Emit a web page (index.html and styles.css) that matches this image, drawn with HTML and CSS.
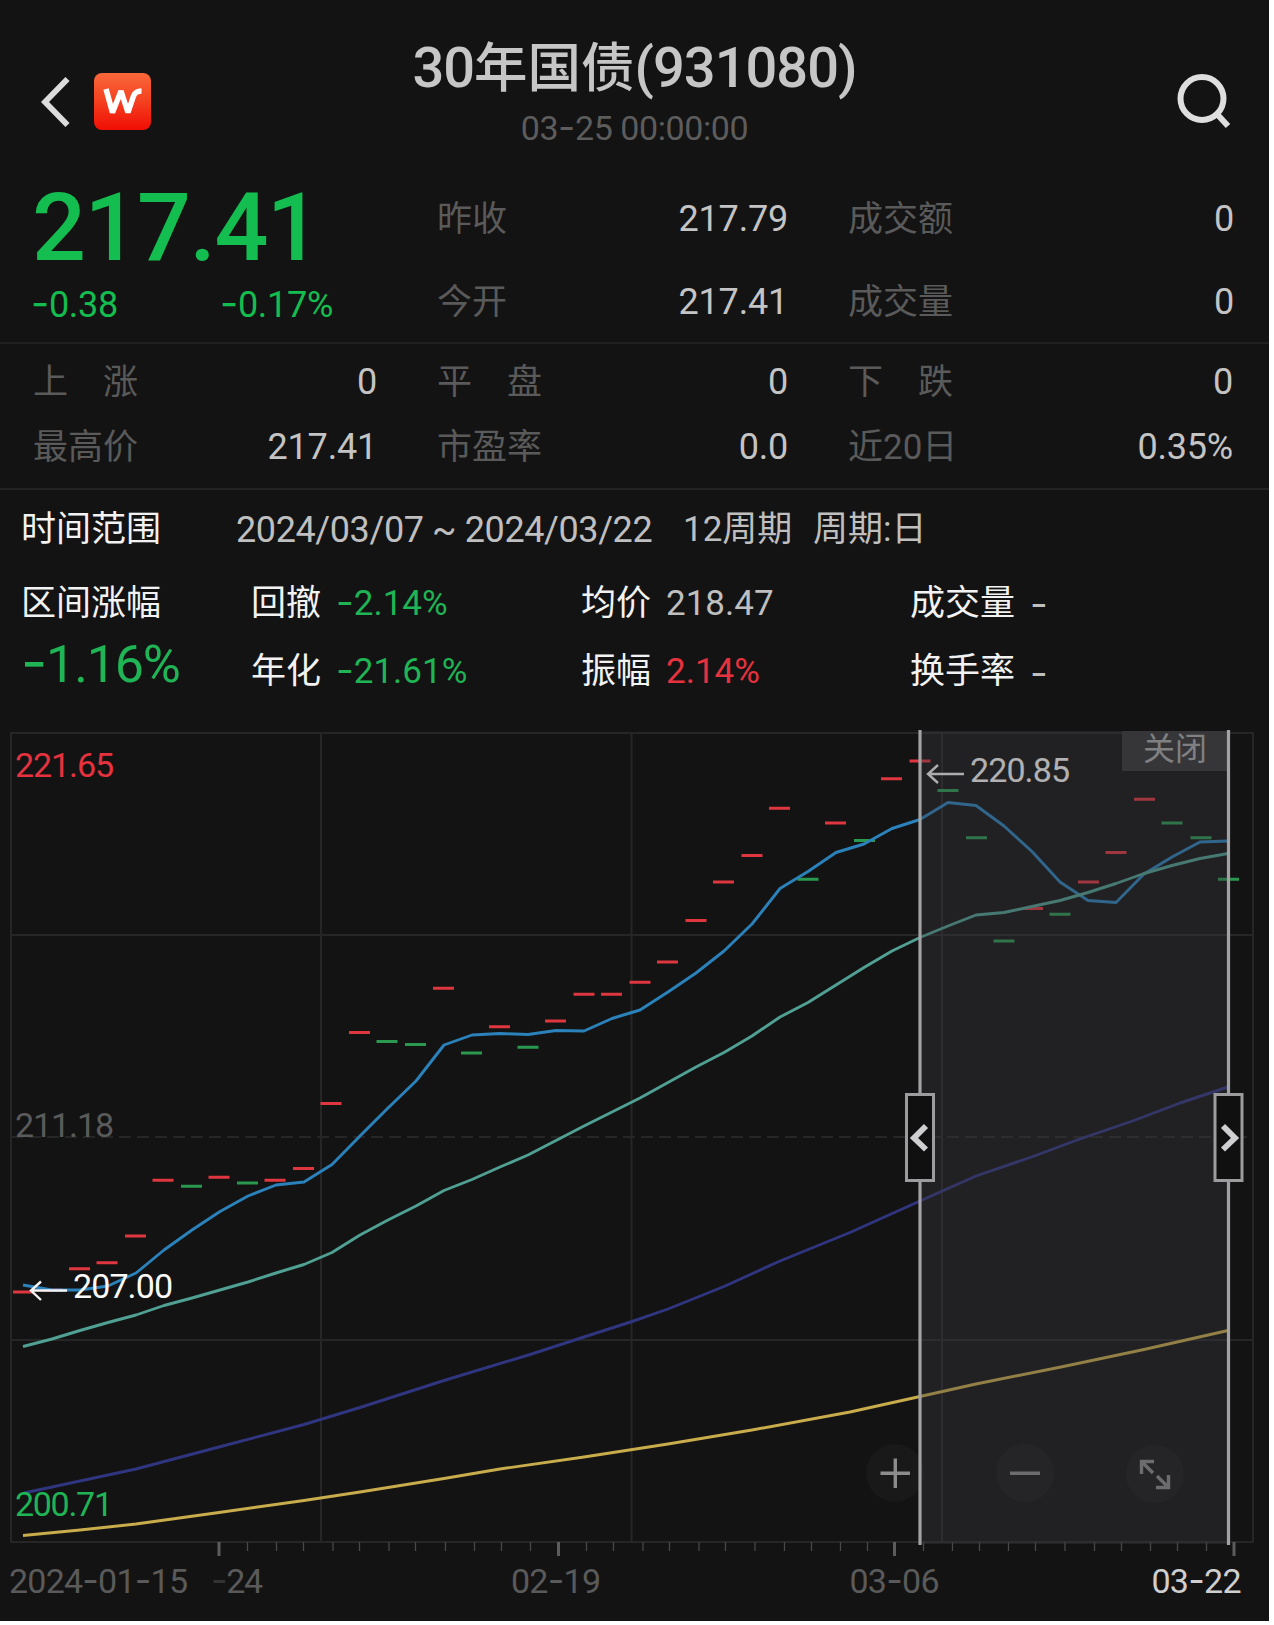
FILE: index.html
```html
<!DOCTYPE html>
<html lang="zh-CN">
<head>
    <meta charset="UTF-8">
    <meta name="viewport" content="width=device-width, initial-scale=1.0">
    <title>30年国债(931080)</title>
    <link rel="stylesheet" href="styles.css">
</head>
<body>
<div class="app">
<header class="header">
<div class="nav">
<svg class="back" viewBox="0 0 30 50"><path d="M26.500 2 L4 25 L26.500 48"/></svg>
<svg class="logo" viewBox="0 0 57 57">
<defs>
<linearGradient id="logoBg" x1="0" y1="0" x2="0" y2="1">
<stop offset="0" stop-color="#f9683a"/>
<stop offset="0.5" stop-color="#f4401f"/>
<stop offset="1" stop-color="#f00d04"/>
</linearGradient>
</defs>
<rect width="57" height="57" rx="8" fill="url(#logoBg)"/>
<path d="M12 16 L18.500 39.500 L27 18 L34 39.500 L39.500 23 Q41.500 18 47.500 18"/>
</svg>
</div>
<div class="heading">
<h1 class="title"><span class="title-num">30</span>年国债<span class="title-num">(931080)</span></h1>
<div class="time">03<span class="dash">-</span>25 00:00:00</div>
</div>
<div class="tools">
<svg class="search" viewBox="0 0 60 60"><circle cx="28" cy="26.500" r="21.500"/><path d="M42 41 L54 54"/></svg>
</div>
</header>

<section class="quote">
<div class="price-box">
<div class="price">217.41</div>
<div class="change"><span class="change-value"><span class="dash">-</span>0.38</span><span><span class="dash">-</span>0.17%</span></div>
</div>
<div class="cell mid"><span class="label">昨收</span><span class="value">217.79</span></div>
<div class="cell"><span class="label">成交额</span><span class="value">0</span></div>
<div class="cell mid"><span class="label">今开</span><span class="value">217.41</span></div>
<div class="cell"><span class="label">成交量</span><span class="value">0</span></div>
</section>

<section class="stats">
<div class="cell"><span class="label">上　涨</span><span class="value">0</span></div>
<div class="cell mid"><span class="label">平　盘</span><span class="value">0</span></div>
<div class="cell"><span class="label">下　跌</span><span class="value">0</span></div>
<div class="cell"><span class="label">最高价</span><span class="value">217.41</span></div>
<div class="cell mid"><span class="label">市盈率</span><span class="value">0.0</span></div>
<div class="cell"><span class="label">近20日</span><span class="value">0.35%</span></div>
</section>

<section class="range">
<div class="range-row">
<span class="range-name">时间范围</span>
<span class="range-dates">2024/03/07 ~ 2024/03/22</span>
<span class="range-count">12周期</span>
<span>周期:日</span>
</div>
<div class="range-grid">
<div class="range-total">
<div class="range-name">区间涨幅</div>
<div class="total green"><span class="dash">-</span>1.16%</div>
</div>
<div class="item"><span class="item-name">回撤</span><span class="green"><span class="dash">-</span>2.14%</span></div>
<div class="item"><span class="item-name">均价</span><span>218.47</span></div>
<div class="item"><span class="item-name">成交量</span><span class="dash">-</span></div>
<div class="item"><span class="item-name">年化</span><span class="green"><span class="dash">-</span>21.61%</span></div>
<div class="item"><span class="item-name">振幅</span><span class="red">2.14%</span></div>
<div class="item"><span class="item-name">换手率</span><span class="dash">-</span></div>
</div>
</section>

<svg class="chart" viewBox="0 720 1269 901">
<!-- grid -->
<path class="grid" d="M11 733 H1253 V1542 H11 Z M11 935 H1253 M11 1340 H1253 M321 733 V1542 M631.500 733 V1542 M942 733 V1542"/>
<path class="grid grid-dash" d="M11 1137 H1253"/>

<!-- axis ticks -->
<path class="tick" d="M247.500 1542v9M276.500 1542v9M303.500 1542v9M333 1542v9M359.500 1542v9M389 1542v9M415.500 1542v9M445.500 1542v9M474.500 1542v9M501.500 1542v9M530.500 1542v9M586.500 1542v9M613.500 1542v9M643 1542v9M669.500 1542v9M699 1542v9M725.500 1542v9M755 1542v9M784.500 1542v9M811.500 1542v9M840.500 1542v9M867.500 1542v9M923.500 1542v9M952.500 1542v9M979.500 1542v9M1008.500 1542v9M1035.500 1542v9M1065 1542v9M1094.500 1542v9M1121.500 1542v9M1150.500 1542v9M1177.500 1542v9M1206.500 1542v9"/>
<path class="tick-major" d="M219 1542v14M558.500 1542v14M894.500 1542v14M1234 1542v14"/>

<!-- daily marks -->
<path class="up" d="M13 1292h21M41.500 1290h21M69 1268.700h21M96.500 1262.700h21M125 1236h21M152.500 1180.300h21M208.500 1177.300h21M264.500 1180.300h21M293 1168.500h21M320.500 1103.500h21M349 1032.500h21M433 988.300h21M489 1026.700h21M545 1021h21M573.500 994.300h21M601 994.300h21M629.500 982.300h21M657 962h21M685.500 920.500h21M713 882h21M741.500 855.500h21M769 808.300h21M825 823h21M881 778.700h21M909.500 761h21M1022 908.500h21M1078 882h21M1105.500 852.500h21M1134 799.300h21"/>
<path class="down" d="M181 1186.300h21M237 1183h21M376.500 1041.500h21M405 1044.500h21M461 1053h21M517.500 1047.300h21M797.500 879.300h21M854 840.500h21M937.500 790.500h21M966 837.700h21M993.500 941h21M1049.500 914.300h21M1161.500 823h21M1190.500 837.700h21M1218 879.300h21"/>

<!-- moving averages -->
<polyline class="ma blue" points="23,1285 52,1290 80,1290 108,1286 136,1273 164,1250 192,1230 220,1211.500 248,1196 276,1185 304,1182 332,1164.500 360,1136 388,1108 416,1081 444,1045 472,1035 500,1033.500 528,1034.500 556,1030.500 584,1031 612,1018.500 640,1010 668,992 696,973 724,951 752,924 780,888.500 808,871.500 836,852.500 864,844 892,828.500 920,819.500 948,802.500 976,805.500 1004,826 1032,851.500 1060,882 1088,900.500 1116,902.500 1144,874 1172,857 1200,842 1228,841"/>
<polyline class="ma teal" points="23,1346.500 52,1339 80,1330.500 108,1322.500 136,1315 164,1305.500 192,1298 220,1290 248,1282 276,1273 304,1264.500 332,1252.500 360,1235 388,1220 416,1206 444,1190.500 472,1179.500 500,1167 528,1155 556,1140.500 584,1126 612,1112 640,1098 668,1082.500 696,1067 724,1052.500 752,1036 780,1017 808,1002.500 836,985 864,967.500 892,951 920,937.500 948,926 976,915 1004,912.500 1032,906.500 1060,900.500 1088,892.500 1116,883.500 1144,873.500 1172,865.500 1200,858.500 1228,853.500"/>
<polyline class="ma purple" points="24,1493 52,1487 80,1481 136,1469 219,1447 304,1424.500 360,1407.500 444,1380.500 530,1354.500 584,1337 632,1321.500 668,1309 724,1286.500 780,1261 850,1232.500 920,1201 976,1176 1033,1156.500 1077,1140 1134,1120.500 1180,1103 1228,1087"/>
<polyline class="ma yellow" points="23,1535.500 80,1530 136,1524 219,1512.500 304,1500.500 360,1492 444,1478.500 500,1469 584,1457 668,1444 752,1430 850,1412 920,1396.500 976,1384 1061,1367 1144,1349.500 1228,1330.500"/>

<!-- price labels -->
<text class="red" x="15" y="776.500" textLength="99">221.65</text>
<text class="dim" x="15" y="1136.500" textLength="99">211.18</text>
<text class="green" x="15" y="1515.500" textLength="98">200.71</text>
<path class="arrow" d="M31 1290.500H67M41 1281.500L31 1290.500L41 1300"/>
<text class="white" x="73" y="1298" textLength="100">207.00</text>
<path class="arrow" d="M928 774H964M938 765L928 774L938 783"/>
<text class="white" x="970" y="781.500" textLength="100">220.85</text>

<!-- zoom buttons -->
<circle class="btn" cx="895" cy="1473" r="29"/>
<circle class="btn" cx="1025" cy="1473" r="29"/>
<circle class="btn" cx="1155" cy="1474" r="29"/>
<path class="icon" d="M880.500 1473.300H910M895.300 1458.500V1488M1010 1473.300H1040"/>
<path class="icon" d="M1154 1461.500H1141.500V1474M1142 1462L1153 1473M1156 1487.500H1168.500V1475M1168 1487L1157 1476"/>

<!-- selected range -->
<rect class="shade" x="920" y="731" width="308" height="813"/>
<rect class="close" x="1122" y="731" width="105" height="40"/>
<text class="close-text" x="1143" y="760">关闭</text>
<path class="edge" d="M920 730V1545M1228.500 730V1545"/>
<rect class="handle" x="906.500" y="1094.500" width="27" height="86"/>
<rect class="handle" x="1215" y="1094.500" width="27" height="86"/>
<path class="chevron" d="M926 1126L914 1138L926 1149.500M1223 1126L1235 1138L1223 1149.500"/>

<!-- dates -->
<text class="dim" x="9" y="1593" textLength="179">2024<tspan class="dash">-</tspan>01<tspan class="dash">-</tspan>15</text>
<text class="dim" x="211" y="1593" textLength="52"><tspan class="dash faint">-</tspan>24</text>
<text class="dim" x="511" y="1593" textLength="90">02<tspan class="dash">-</tspan>19</text>
<text class="dim" x="849.500" y="1593" textLength="90">03<tspan class="dash">-</tspan>06</text>
<text class="light" x="1151.500" y="1593" textLength="90">03<tspan class="dash">-</tspan>22</text>
</svg>
</div>
</body>
</html>
```

FILE: styles.css
```css
body {
    margin: 0;
    background-color: #fff;
}

.app {
    width: 1269px;
    height: 1621px;
    overflow: hidden;
    background-color: #131313;
    color: #bfbfbf;
    font-family: Roboto, "Noto Sans CJK SC", sans-serif;
    font-size: 35px;
    line-height: 60px;
}

.dash {
    font-family: Inter, sans-serif;
    font-size: 1.1em;
    line-height: 1;
}

.green {
    color: #1fb455;
    fill: #1fb455;
}

.red {
    color: #e6323e;
    fill: #e6323e;
}

/* Header */
.header {
    display: flex;
    justify-content: space-between;
    height: 177px;
}

.nav {
    display: flex;
    align-items: center;
    gap: 23px;
    width: 200px;
    height: 57px;
    padding: 73px 0 0 41px;
}

.back {
    width: 30px;
    height: 50px;
    fill: none;
    stroke: #dcdcdc;
    stroke-width: 5.8;
}

.logo {
    width: 57px;
    height: 57px;
}

.logo path {
    fill: none;
    stroke: #fff;
    stroke-width: 5.5;
    stroke-linejoin: bevel;
}

.heading {
    padding-top: 38px;
    text-align: center;
}

.title {
    margin: 0;
    font-size: 53.5px;
    font-weight: 500;
    line-height: 60px;
    color: #c6c6c6;
}

.title-num {
    font-size: 56px;
    letter-spacing: -1px;
}

.time {
    margin-top: 9px;
    font-size: 34px;
    line-height: 40px;
    letter-spacing: -0.4px;
    color: #5c5c5c;
}

.tools {
    display: flex;
    justify-content: flex-end;
    width: 241px;
    padding-top: 72px;
}

.search {
    width: 60px;
    height: 60px;
    margin-right: 35px;
    fill: none;
    stroke: #dedede;
    stroke-width: 6;
}

/* Quote */
.quote {
    display: grid;
    grid-template-columns: 404px 411px 385px;
    grid-template-rows: 82px 83px;
    padding-left: 34px;
    border-bottom: 2px solid #202020;
}

.price-box {
    grid-row: span 2;
    padding-top: 10px;
    color: #13bd50;
}

.price {
    margin-left: -2px;
    font-size: 95px;
    font-weight: 500;
    line-height: 82px;
    letter-spacing: -1.5px;
}

.change {
    display: flex;
    margin-left: -3px;
    font-size: 36px;
    line-height: 72px;
    letter-spacing: -0.3px;
}

.change-value {
    width: 189px;
}

.cell {
    display: flex;
    align-items: center;
    justify-content: space-between;
}

.mid {
    padding-right: 62px;
}

.quote .mid {
    padding-right: 61px;
}

.label {
    margin: 4px 0 0 -1px;
    color: #5a5a5a;
}

.value {
    padding-top: 2px;
    font-size: 36px;
    letter-spacing: -0.2px;
    color: #c4c4c4;
}

.stats {
    display: grid;
    grid-template-columns: 343px 350px 384px;
    column-gap: 61px;
    grid-auto-rows: 65px;
    height: 139px;
    padding: 5px 0 0 34px;
    border-bottom: 2px solid #232323;
}

.stats .label {
    margin-top: 3px;
}

.stats .value {
    padding-top: 0;
}

.stats .mid {
    padding-right: 0;
}

/* Selected range summary */
.range {
    height: 229px;
    padding: 1px 0 0 21px;
}

.range-row {
    display: flex;
    align-items: center;
    height: 78px;
}

.range-name,
.item-name {
    color: #f2f2f2;
}

.range-row .range-name {
    width: 215px;
}

.range-dates {
    width: 447px;
    font-size: 36px;
    letter-spacing: -0.4px;
}

.range-count {
    width: 130px;
}

.range-grid {
    display: grid;
    grid-template-columns: 230px 330px 329px 1fr;
    grid-template-rows: 69px 68px;
}

.range-total {
    grid-row: span 2;
    line-height: 69px;
}

.total {
    margin-top: -5px;
    font-size: 52px;
    line-height: 57px;
    letter-spacing: -1.2px;
}

.item {
    display: flex;
    align-items: center;
    gap: 15px;
}

/* Chart */
.chart {
    display: block;
    width: 1269px;
    height: 901px;
    fill: none;
}

.chart text {
    font-size: 34px;
}

.chart .dash {
    font-size: 36px;
}

.grid {
    stroke: #262626;
    stroke-width: 2;
}

.grid-dash {
    stroke-dasharray: 12 6;
}

.tick {
    stroke: #484848;
    stroke-width: 1.3;
}

.tick-major {
    stroke: #5c5c5c;
    stroke-width: 3;
}

.up {
    stroke: #df3640;
    stroke-width: 3;
}

.down {
    stroke: #2b9850;
    stroke-width: 3;
}

.ma {
    stroke-width: 2.9;
    stroke-linejoin: round;
}

.blue {
    stroke: #2b82bb;
}

.teal {
    stroke: #50a093;
}

.purple {
    stroke: #30357f;
}

.yellow {
    stroke: #c9ac4b;
}

.dim {
    fill: #5a5a5a;
}

.faint {
    fill: #333;
}

.light {
    fill: #cfcfcf;
}

.white {
    fill: #fafafa;
}

.arrow {
    stroke: #f4f4f4;
    stroke-width: 2.4;
}

.btn {
    fill: #191919;
}

.icon {
    stroke: #8c8c8c;
    stroke-width: 3.4;
}

.shade {
    fill: rgba(58, 58, 62, 0.38);
}

.close {
    fill: #363639;
}

.chart .close-text {
    font-size: 32px;
    fill: #808082;
}

.edge {
    stroke: #a2a2a4;
    stroke-width: 3.2;
}

.handle {
    fill: #101011;
    stroke: #9c9c9e;
    stroke-width: 3;
}

.chevron {
    stroke: #cfcfd1;
    stroke-width: 5.8;
}
```
